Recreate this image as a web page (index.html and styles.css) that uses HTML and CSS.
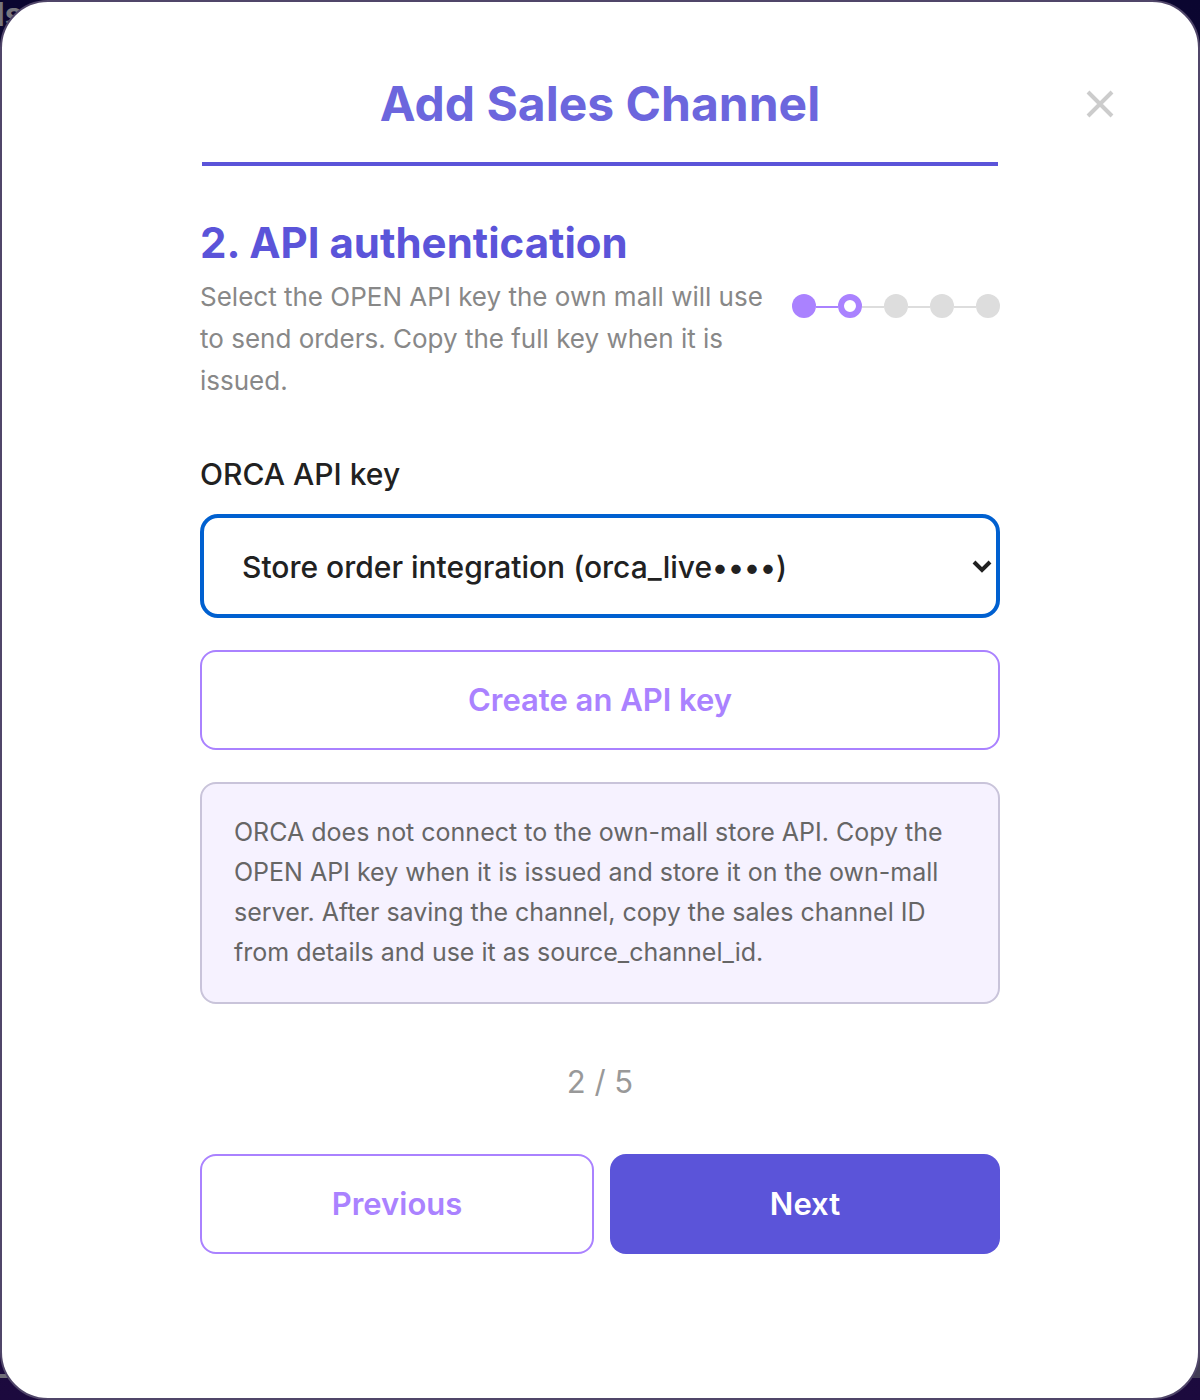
FILE: index.html
```html
<!DOCTYPE html>
<html lang="en">
<head>
<meta charset="utf-8">
<meta name="viewport" content="width=device-width, initial-scale=1">
<title>Add Sales Channel</title>
<link rel="stylesheet" href="styles.css">
</head>
<body>
<div class="backdrop" aria-hidden="true">
  <span class="backdrop-title">ls</span>
  <span class="backdrop-ring"></span>
  <span class="backdrop-panel"></span>
</div>
<div class="dialog" role="dialog" aria-labelledby="dialog-title">
  <header class="dialog-header">
    <h1 class="dialog-title" id="dialog-title">Add Sales Channel</h1>
  </header>
  <button class="close" type="button" aria-label="Close">
    <svg width="28" height="28" viewBox="0 0 28 28" fill="none" stroke="#ccc" stroke-width="4"><path d="M2 2 26 26M26 2 2 26"/></svg>
  </button>
  <form class="dialog-body">
    <div class="step-head">
      <div class="step-text">
        <h2 class="step-title">2. API authentication</h2>
        <p class="step-description">Select the OPEN API key the own mall will use to send orders. Copy the full key when it is issued.</p>
      </div>
      <ol class="stepper" aria-label="Step 2 of 5">
        <li class="dot dot-done"></li>
        <li class="dot dot-current"></li>
        <li class="dot"></li>
        <li class="dot"></li>
        <li class="dot"></li>
      </ol>
    </div>
    <div class="field">
      <label class="label" for="api-key">ORCA API key</label>
      <div class="select-wrap">
        <select class="select" id="api-key">
          <option>Store order integration (orca_live••••)</option>
        </select>
        <svg class="select-arrow" width="20" height="14" viewBox="0 0 20 14" fill="none" stroke="#212121" stroke-width="4"><path d="M2 2 10 10 18 2"/></svg>
      </div>
    </div>
    <button class="button button-outline button-create" type="button">Create an API key</button>
    <p class="note">ORCA does not connect to the own-mall store API. Copy the OPEN API key when it is issued and store it on the own-mall server. After saving the channel, copy the sales channel ID from details and use it as source_channel_id.</p>
    <p class="page-count">2 / 5</p>
    <div class="actions">
      <button class="button button-outline" type="button">Previous</button>
      <button class="button button-primary" type="submit">Next</button>
    </div>
  </form>
</div>
</body>
</html>
```
FILE: styles.css
```css
* {
  box-sizing: border-box;
}

body {
  margin: 0;
  background: #10062f;
  color: #212121;
  font-family: Inter, "Liberation Sans", sans-serif;
}

h1, h2, p, ol {
  margin: 0;
  padding: 0;
}

.backdrop {
  position: fixed;
  inset: 0;
  overflow: hidden;
  background: linear-gradient(#0b0630, #1c0a3e);
}

.backdrop-title {
  position: absolute;
  top: -4px;
  left: -4px;
  color: #77767c;
  font-size: 32px;
  font-weight: 700;
  line-height: 38px;
}

.backdrop-ring {
  position: absolute;
  bottom: 22px;
  left: -18px;
  width: 36px;
  height: 36px;
  border: 4px solid #706e78;
  border-radius: 12px;
}

.backdrop-panel {
  position: absolute;
  right: 0;
  bottom: 22px;
  width: 8px;
  height: 40px;
  background: #413c55;
}

.dialog {
  position: relative;
  min-height: 100vh;
  border: 2px solid #504669;
  border-radius: 48px;
  background: #fff;
}

.dialog-header {
  margin: 0 200px;
  padding: 72px 0 28px;
  border-bottom: 4px solid #5b54d9;
}

.dialog-title {
  color: #6c66dd;
  font-size: 48px;
  font-weight: 700;
  line-height: 60px;
  text-align: center;
}

.close {
  position: absolute;
  top: 80px;
  right: 76px;
  display: flex;
  align-items: center;
  justify-content: center;
  width: 44px;
  height: 44px;
  padding: 0;
  border: 0;
  background: none;
}

.dialog-body {
  margin: 44px 198px 0;
  padding-bottom: 144px;
}

.step-head {
  display: flex;
  align-items: center;
  gap: 16px;
  margin-bottom: 46px;
}

.step-text {
  flex: 1;
}

.step-title {
  color: #5b54d9;
  font-size: 42px;
  font-weight: 700;
  line-height: 66px;
}

.step-description {
  color: #888;
  font-size: 26px;
  line-height: 42px;
}

.stepper {
  display: flex;
  align-items: center;
  gap: 22px;
  list-style: none;
}

.dot {
  position: relative;
  width: 24px;
  height: 24px;
  border-radius: 50%;
  background: #ddd;
}

.dot + .dot::before {
  content: "";
  position: absolute;
  top: 12px;
  right: 100%;
  width: 22px;
  height: 2px;
  background: #ddd;
}

.dot-done {
  background: #aa82ff;
}

.dot-current {
  border: 6px solid #aa82ff;
  background: #fff;
}

.dot + .dot-current::before {
  top: 6px;
  right: 18px;
  background: #aa82ff;
}

.label {
  display: block;
  margin-bottom: 14px;
  font-size: 30px;
  font-weight: 500;
  line-height: 52px;
}

.select-wrap {
  position: relative;
}

.select {
  display: block;
  width: 100%;
  height: 104px;
  padding: 2px 38px 0;
  border: 4px solid #0060d0;
  border-radius: 18px;
  outline: none;
  appearance: none;
  background: #fff;
  color: #212121;
  font: 500 30px/48px Inter, "Liberation Sans", sans-serif;
}

.select-arrow {
  position: absolute;
  top: 46px;
  right: 8px;
  pointer-events: none;
}

.button {
  height: 100px;
  padding: 0 32px;
  border: 0;
  border-radius: 16px;
  font: 600 31px/48px Inter, "Liberation Sans", sans-serif;
}

.button-outline {
  border: 2px solid #aa82ff;
  background: #fff;
  color: #aa82ff;
}

.button-primary {
  background: #5b54d9;
  color: #fff;
}

.button-create {
  display: block;
  width: 100%;
  margin: 32px 0;
}

.note {
  padding: 28px 32px 30px;
  border: 2px solid #c9c4da;
  border-radius: 16px;
  background: #f6f2ff;
  color: #666;
  font-size: 25px;
  line-height: 40px;
}

.page-count {
  margin: 54px 0 48px;
  color: #999;
  font-size: 31px;
  line-height: 48px;
  text-align: center;
}

.actions {
  display: flex;
  gap: 16px;
}

.actions .button {
  flex: 1;
}
```
